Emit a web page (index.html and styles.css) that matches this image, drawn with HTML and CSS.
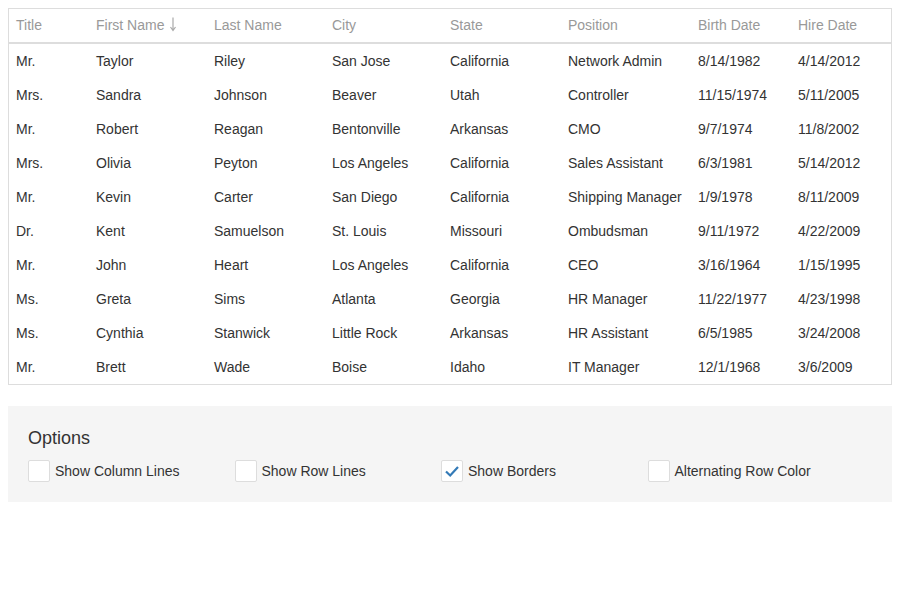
FILE: index.html
```html
<!DOCTYPE html>
<html>
<head>
<meta charset="utf-8">
<link rel="stylesheet" href="styles.css">
</head>
<body>
<div class="grid">
  <div class="row head">
    <div class="cell">Title</div>
    <div class="cell">First Name <svg class="sort" width="8" height="16" viewBox="0 0 8 16"><path d="M4 1.5 V14 M1.5 11 L4 14.5 L6.5 11" fill="none" stroke="#aaa" stroke-width="1.2"/></svg></div>
    <div class="cell">Last Name</div>
    <div class="cell">City</div>
    <div class="cell">State</div>
    <div class="cell">Position</div>
    <div class="cell">Birth Date</div>
    <div class="cell">Hire Date</div>
  </div>
  <div class="row"><div class="cell">Mr.</div><div class="cell">Taylor</div><div class="cell">Riley</div><div class="cell">San Jose</div><div class="cell">California</div><div class="cell">Network Admin</div><div class="cell">8/14/1982</div><div class="cell">4/14/2012</div></div>
  <div class="row"><div class="cell">Mrs.</div><div class="cell">Sandra</div><div class="cell">Johnson</div><div class="cell">Beaver</div><div class="cell">Utah</div><div class="cell">Controller</div><div class="cell">11/15/1974</div><div class="cell">5/11/2005</div></div>
  <div class="row"><div class="cell">Mr.</div><div class="cell">Robert</div><div class="cell">Reagan</div><div class="cell">Bentonville</div><div class="cell">Arkansas</div><div class="cell">CMO</div><div class="cell">9/7/1974</div><div class="cell">11/8/2002</div></div>
  <div class="row"><div class="cell">Mrs.</div><div class="cell">Olivia</div><div class="cell">Peyton</div><div class="cell">Los Angeles</div><div class="cell">California</div><div class="cell">Sales Assistant</div><div class="cell">6/3/1981</div><div class="cell">5/14/2012</div></div>
  <div class="row"><div class="cell">Mr.</div><div class="cell">Kevin</div><div class="cell">Carter</div><div class="cell">San Diego</div><div class="cell">California</div><div class="cell">Shipping Manager</div><div class="cell">1/9/1978</div><div class="cell">8/11/2009</div></div>
  <div class="row"><div class="cell">Dr.</div><div class="cell">Kent</div><div class="cell">Samuelson</div><div class="cell">St. Louis</div><div class="cell">Missouri</div><div class="cell">Ombudsman</div><div class="cell">9/11/1972</div><div class="cell">4/22/2009</div></div>
  <div class="row"><div class="cell">Mr.</div><div class="cell">John</div><div class="cell">Heart</div><div class="cell">Los Angeles</div><div class="cell">California</div><div class="cell">CEO</div><div class="cell">3/16/1964</div><div class="cell">1/15/1995</div></div>
  <div class="row"><div class="cell">Ms.</div><div class="cell">Greta</div><div class="cell">Sims</div><div class="cell">Atlanta</div><div class="cell">Georgia</div><div class="cell">HR Manager</div><div class="cell">11/22/1977</div><div class="cell">4/23/1998</div></div>
  <div class="row"><div class="cell">Ms.</div><div class="cell">Cynthia</div><div class="cell">Stanwick</div><div class="cell">Little Rock</div><div class="cell">Arkansas</div><div class="cell">HR Assistant</div><div class="cell">6/5/1985</div><div class="cell">3/24/2008</div></div>
  <div class="row"><div class="cell">Mr.</div><div class="cell">Brett</div><div class="cell">Wade</div><div class="cell">Boise</div><div class="cell">Idaho</div><div class="cell">IT Manager</div><div class="cell">12/1/1968</div><div class="cell">3/6/2009</div></div>
</div>

<div class="options">
  <div class="options-title">Options</div>
  <div class="checks">
    <label class="check"><span class="box"></span>Show Column Lines</label>
    <label class="check"><span class="box"></span>Show Row Lines</label>
    <label class="check"><span class="box"><svg width="16" height="16" viewBox="0 0 16 16"><path d="M2 8.5 L6.2 12.5 L14 4" fill="none" stroke="#337ab7" stroke-width="2.2"/></svg></span>Show Borders</label>
    <label class="check"><span class="box"></span>Alternating Row Color</label>
  </div>
</div>
</body>
</html>
```

FILE: styles.css
```css
body {
  margin: 8px;
  font-family: "Liberation Sans", Arial, sans-serif;
  font-size: 14px;
  color: #333;
  background: #fff;
}

.grid {
  border: 1px solid #ddd;
}

.row {
  display: grid;
  grid-template-columns: 80px 118px 118px 118px 118px 130px 100px 1fr;
  height: 34px;
}

.row.head {
  height: 33px;
  border-bottom: 2px solid #ddd;
  color: #999;
}

.row.head .cell {
  padding-bottom: 2px;
}

.cell {
  display: flex;
  align-items: center;
  padding-left: 7px;
  white-space: nowrap;
}

.sort {
  margin-left: 5px;
  margin-top: -1px;
}

.options {
  margin-top: 21px;
  background: #f5f5f5;
  padding: 20px;
}

.options-title {
  font-size: 18px;
  line-height: 24px;
  margin-bottom: 10px;
}

.checks {
  display: grid;
  grid-template-columns: repeat(4, 206.5px);
}

.check {
  display: flex;
  align-items: center;
  height: 22px;
}

.box {
  width: 20px;
  height: 20px;
  border: 1px solid #ddd;
  border-radius: 2px;
  background: #fff;
  margin-right: 5px;
  display: flex;
  align-items: center;
  justify-content: center;
}
```
